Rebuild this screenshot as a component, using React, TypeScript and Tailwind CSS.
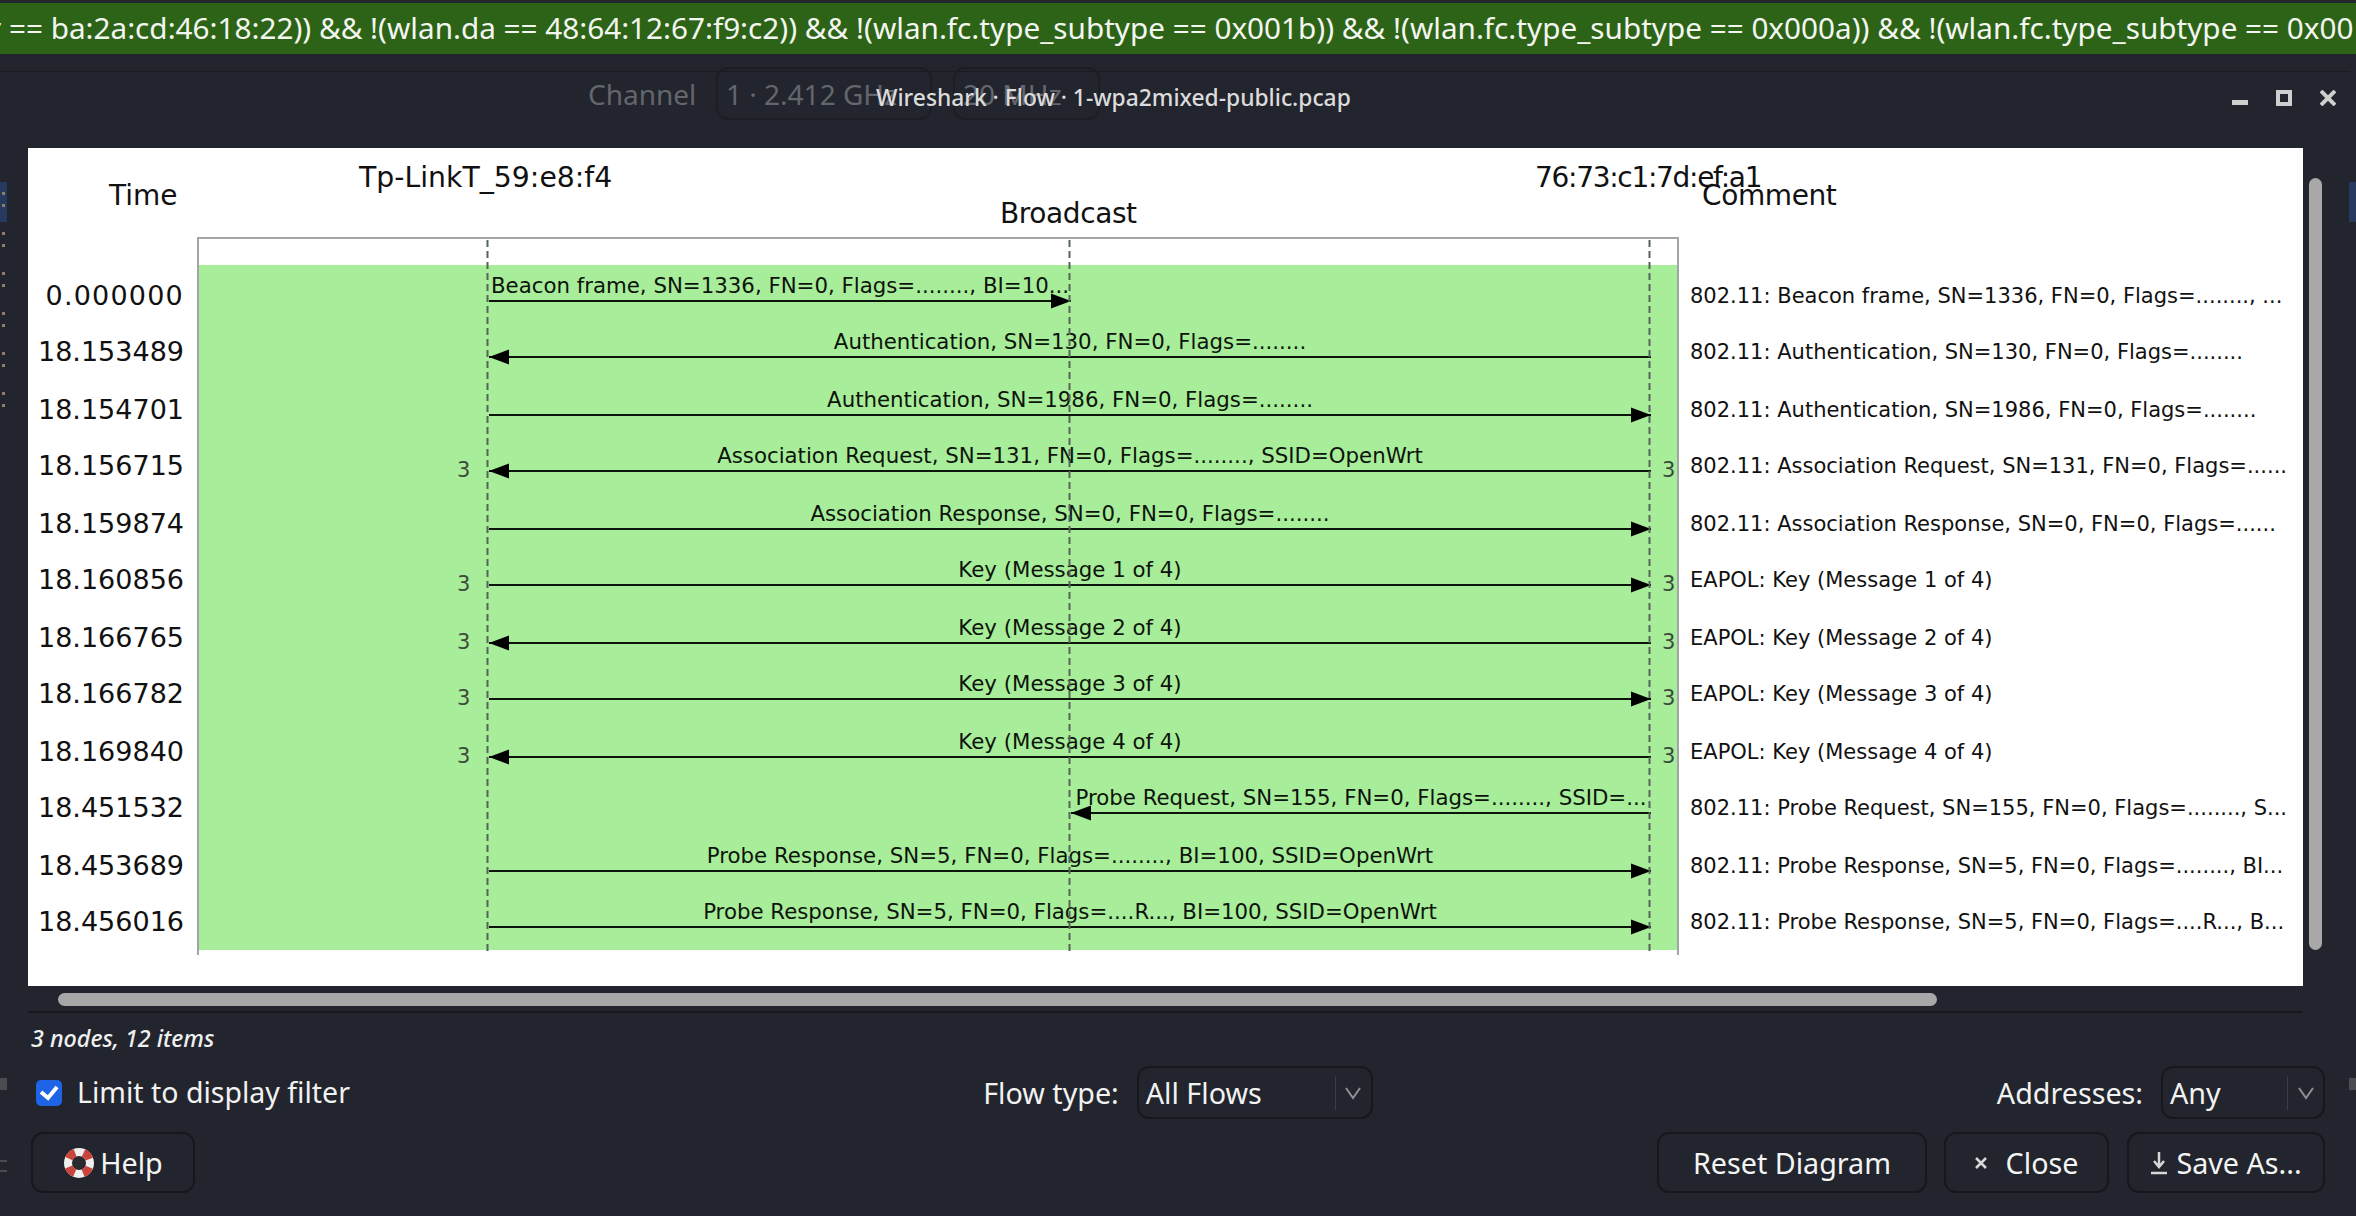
import React from 'react';

const rows = [
  { time: '0.000000', label: 'Beacon frame, SN=1336, FN=0, Flags=........, BI=10...', comment: '802.11: Beacon frame, SN=1336, FN=0, Flags=........, ...', dir: 'r', span: 'ab', n: false },
  { time: '18.153489', label: 'Authentication, SN=130, FN=0, Flags=........', comment: '802.11: Authentication, SN=130, FN=0, Flags=........', dir: 'l', span: 'ac', n: false },
  { time: '18.154701', label: 'Authentication, SN=1986, FN=0, Flags=........', comment: '802.11: Authentication, SN=1986, FN=0, Flags=........', dir: 'r', span: 'ac', n: false },
  { time: '18.156715', label: 'Association Request, SN=131, FN=0, Flags=........, SSID=OpenWrt', comment: '802.11: Association Request, SN=131, FN=0, Flags=......', dir: 'l', span: 'ac', n: true },
  { time: '18.159874', label: 'Association Response, SN=0, FN=0, Flags=........', comment: '802.11: Association Response, SN=0, FN=0, Flags=......', dir: 'r', span: 'ac', n: false },
  { time: '18.160856', label: 'Key (Message 1 of 4)', comment: 'EAPOL: Key (Message 1 of 4)', dir: 'r', span: 'ac', n: true },
  { time: '18.166765', label: 'Key (Message 2 of 4)', comment: 'EAPOL: Key (Message 2 of 4)', dir: 'l', span: 'ac', n: true },
  { time: '18.166782', label: 'Key (Message 3 of 4)', comment: 'EAPOL: Key (Message 3 of 4)', dir: 'r', span: 'ac', n: true },
  { time: '18.169840', label: 'Key (Message 4 of 4)', comment: 'EAPOL: Key (Message 4 of 4)', dir: 'l', span: 'ac', n: true },
  { time: '18.451532', label: 'Probe Request, SN=155, FN=0, Flags=........, SSID=...', comment: '802.11: Probe Request, SN=155, FN=0, Flags=........, S...', dir: 'l', span: 'bc', n: false },
  { time: '18.453689', label: 'Probe Response, SN=5, FN=0, Flags=........, BI=100, SSID=OpenWrt', comment: '802.11: Probe Response, SN=5, FN=0, Flags=........, BI...', dir: 'r', span: 'ac', n: false },
  { time: '18.456016', label: 'Probe Response, SN=5, FN=0, Flags=....R..., BI=100, SSID=OpenWrt', comment: '802.11: Probe Response, SN=5, FN=0, Flags=....R..., B...', dir: 'r', span: 'ac', n: false },
];

const rowHeights = ['h-[56px]', 'h-[58px]', 'h-[56px]', 'h-[58px]', 'h-[56px]', 'h-[58px]', 'h-[56px]', 'h-[58px]', 'h-[56px]', 'h-[58px]', 'h-[56px]', 'h-[59px]'];

const spanClass = {
  ab: 'left-[290px] w-[582px]',
  ac: 'left-[290px] w-[1162px]',
  bc: 'left-[872px] w-[580px]',
};

const A = 290, B = 872, C = 1452;

function Arrow({ dir, span }: { dir: string; span: string }) {
  const x1 = span === 'bc' ? B : A;
  const x2 = span === 'ab' ? B : C;
  return (
    <svg className="absolute left-0 top-0" width="1480" height="59">
      <line x1={x1} x2={x2} y1="36" y2="36" stroke="#0c140c" strokeWidth="2" />
      {dir === 'r' ? (
        <polygon points={`${x2},36 ${x2 - 20},28.5 ${x2 - 20},43.5`} fill="#000" />
      ) : (
        <polygon points={`${x1},36 ${x1 + 20},28.5 ${x1 + 20},43.5`} fill="#000" />
      )}
    </svg>
  );
}

function Chevron() {
  return (
    <svg width="18" height="14" viewBox="0 0 18 14" fill="none" stroke="#8e9096" strokeWidth="2">
      <path d="M2 2l7 10 7-10" />
    </svg>
  );
}

function Combo({ text, width }: { text: string; width: string }) {
  return (
    <div className={`${width} h-[53px] flex items-center rounded-[12px] border-2 border-[#16181c] pl-[7px] text-[28.7px] text-[#f2f2f2]`}>
      <span className="flex-1">{text}</span>
      <div className="h-[34px] w-px bg-[#3a3d44]" />
      <div className="w-[35px] flex justify-center"><Chevron /></div>
    </div>
  );
}

function Button({ width, children }: { width: string; children: React.ReactNode }) {
  return (
    <div className={`${width} h-[61px] flex items-center justify-center rounded-[12px] border-2 border-[#16181c] text-[28.7px] text-[#f4f4f4]`}>
      {children}
    </div>
  );
}

export default function App() {
  return (
    <div className="relative w-[2356px] h-[1216px] overflow-hidden bg-[#22252d] font-['Noto_Sans'] text-white">
      {/* display filter bar */}
      <div className="mt-[3px] pt-[4px] h-[51px] bg-[#2d6316] overflow-hidden whitespace-nowrap text-[29.7px] leading-[42px] text-[#f3f6f0]">
        <span className="ml-[-11px]">r == ba:2a:cd:46:18:22)) &amp;&amp; !(wlan.da == 48:64:12:67:f9:c2)) &amp;&amp; !(wlan.fc.type_subtype == 0x001b)) &amp;&amp; !(wlan.fc.type_subtype == 0x000a)) &amp;&amp; !(wlan.fc.type_subtype == 0x00</span>
      </div>

      {/* title bar, with the main window showing through behind it */}
      <div className="relative h-[94px] pt-[17px]">
        <div className="h-[1px] mr-[6px] bg-[#191b20]" />
        <div className="absolute left-[588px] top-[13px] flex items-center text-[28px] text-[#63666c]">
          <span className="w-[128px]">Channel</span>
          <div className="w-[216px] h-[53px] flex items-center pl-[8px] rounded-[12px] border-2 border-[#1c1e24]">1 · 2.412 GHz</div>
          <div className="w-[147px] h-[53px] ml-[21px] flex items-center pl-[8px] rounded-[12px] border-2 border-[#1c1e24]">20 MHz</div>
        </div>
        <div className="absolute left-[876px] top-[26px] text-[22.8px] leading-[36px] font-medium text-[#dcdcdc]">Wireshark · Flow · 1-wpa2mixed-public.pcap</div>
        <div className="absolute right-[20px] top-[36px] flex items-end gap-[28px]">
          <div className="w-[16px] h-[5px] mb-[1px] bg-[#cfcfcf]" />
          <div className="w-[16px] h-[16px] border-[4px] border-[#cfcfcf]" />
          <svg width="16" height="16" viewBox="0 0 16 16" stroke="#cfcfcf" strokeWidth="4"><path d="M1 1l14 14M15 1L1 15" /></svg>
        </div>
      </div>

      {/* flow diagram */}
      <div className="flex pl-[28px]">
        <div className="w-[2275px] h-[838px] bg-white overflow-hidden font-['DejaVu_Sans'] text-[#111]">
          <div className="relative h-[89px] text-[28px] leading-[36px]">
            <span className="absolute left-[81px] top-[30px]">Time</span>
            <span className="absolute left-[331px] top-[12px] text-[28.3px]">Tp-LinkT_59:e8:f4</span>
            <span className="absolute left-[972px] top-[48px] tracking-[-0.4px]">Broadcast</span>
            <span className="absolute left-[1507px] top-[12px] tracking-[-1.3px]">76:73:c1:7d:ef:a1</span>
            <span className="absolute left-[1674px] top-[30px] tracking-[-0.4px]">Comment</span>
          </div>
          <div className="relative">
            <div className="ml-[169px] w-[1482px] h-[28px] border-x-2 border-t-2 border-[#a2a5a8]" />
            {rows.map((r, i) => (
              <div key={r.time} className={`flex ${rowHeights[i]}`}>
                <div className={`w-[169px] pr-[13px] pt-[14px] text-right text-[27px] leading-[34px] ${i === 0 ? 'tracking-[1.2px]' : ''}`}>{r.time}</div>
                <div className="relative w-[1482px] border-x-2 border-[#a2a5a8] bg-[#a8ed9a]">
                  <Arrow dir={r.dir} span={r.span} />
                  <div className={`absolute top-[8px] text-center whitespace-nowrap text-[21.3px] leading-[26px] text-[#0c140b] ${spanClass[r.span as keyof typeof spanClass]}`}>{r.label}</div>
                  {r.n && (
                    <>
                      <span className="absolute left-[258px] top-[22px] text-[21px] leading-[26px] text-[#3b4a3a]">3</span>
                      <span className="absolute left-[1463px] top-[22px] text-[21px] leading-[26px] text-[#3b4a3a]">3</span>
                    </>
                  )}
                </div>
                <div className="pl-[11px] pt-[17px] whitespace-nowrap text-[21px] leading-[28px]">{r.comment}</div>
              </div>
            ))}
            <div className="ml-[169px] w-[1482px] h-[5px] border-x-2 border-[#a2a5a8]" />
            {/* lifelines */}
            <svg className="absolute left-[169px] top-0" width="1482" height="718">
              <path d="M290.5 3V718M872.5 3V718M1452.5 3V718" stroke="#56655a" strokeWidth="2" strokeDasharray="7 4" fill="none" />
            </svg>
          </div>
        </div>
        <div className="ml-[6px] mt-[30px] w-[13px] h-[772px] rounded-full bg-[#a8a8a8]" />
      </div>

      {/* horizontal scrollbar */}
      <div className="ml-[58px] mt-[7px] w-[1879px] h-[13px] rounded-full bg-[#a8a8a8]" />
      <div className="ml-[28px] mt-[5px] w-[2275px] h-[2px] bg-[#16181c]" />

      <div className="px-[31px]">
        <div className="pt-[10px] h-[53px] text-[23.3px] leading-[30px] italic font-medium text-[#f0f0f0]">3 nodes, 12 items</div>
        <div className="grid grid-cols-3 items-center h-[53px] text-[28.7px] text-[#f2f2f2]">
          <div className="flex items-center pl-[5px]">
            <div className="w-[26px] h-[26px] rounded-[5px] bg-[#1f63e6] flex items-center justify-center">
              <svg width="20" height="16" viewBox="0 0 20 16" fill="none" stroke="#fff" strokeWidth="4"><path d="M2 7l7 6 9-11" /></svg>
            </div>
            <span className="ml-[15px] text-[28.5px]">Limit to display filter</span>
          </div>
          <div className="flex items-center justify-center gap-[18px]">
            <span>Flow type:</span>
            <Combo text="All Flows" width="w-[236px]" />
          </div>
          <div className="flex items-center justify-end gap-[18px]">
            <span>Addresses:</span>
            <Combo text="Any" width="w-[164px]" />
          </div>
        </div>
        <div className="flex mt-[13px]">
          <Button width="w-[164px]">
            <svg width="32" height="32" viewBox="0 0 32 32" fill="none" className="mr-[5px]">
              <circle cx="16" cy="16" r="11" stroke="#efefef" strokeWidth="8" />
              <circle cx="16" cy="16" r="11" stroke="#c9443a" strokeWidth="8" strokeDasharray="8.64 8.64" strokeDashoffset="-4.32" />
              <circle cx="16" cy="16" r="6" fill="#2a2b2e" />
            </svg>
            Help
          </Button>
          <div className="flex-1" />
          <Button width="w-[270px]">Reset Diagram</Button>
          <div className="ml-[17px]">
            <Button width="w-[165px]">
              <svg width="12" height="12" viewBox="0 0 12 12" stroke="#d8d8d8" strokeWidth="2.5" className="mr-[19px]"><path d="M1 1l10 10M11 1L1 11" /></svg>
              Close
            </Button>
          </div>
          <div className="ml-[18px]">
            <Button width="w-[198px]">
              <svg width="18" height="24" viewBox="0 0 18 24" fill="none" stroke="#d8d8d8" strokeWidth="2.5" className="mr-[8px]"><path d="M9 1v14M4 10l5 6 5-6M1 22h16" /></svg>
              Save As...
            </Button>
          </div>
        </div>
      </div>

      {/* edges of the main window behind the dialog */}
      <div className="absolute left-0 top-[182px] w-[7px] h-[40px] bg-[#26395f]" />
      <div className="absolute left-[2px] top-[192px] flex flex-col">
        {[0, 1, 2, 3, 4, 5].map((g) => (
          <div key={g} className="h-[40px] flex flex-col gap-[9px]">
            <div className="w-[3px] h-[3px] bg-[#8d7f6a]" />
            <div className="w-[3px] h-[3px] bg-[#8d7f6a]" />
          </div>
        ))}
      </div>
      <div className="absolute left-0 top-[1078px] w-[7px] h-[12px] bg-[#4a4c52]" />
      <div className="absolute left-0 top-[1160px] w-[7px] h-[2px] bg-[#4a4c52]" />
      <div className="absolute left-0 top-[1170px] w-[7px] h-[2px] bg-[#4a4c52]" />
      <div className="absolute right-0 top-[182px] w-[7px] h-[40px] bg-[#26395f]" />
      <div className="absolute right-0 top-[1078px] w-[7px] h-[12px] bg-[#4a4c52]" />
    </div>
  );
}
